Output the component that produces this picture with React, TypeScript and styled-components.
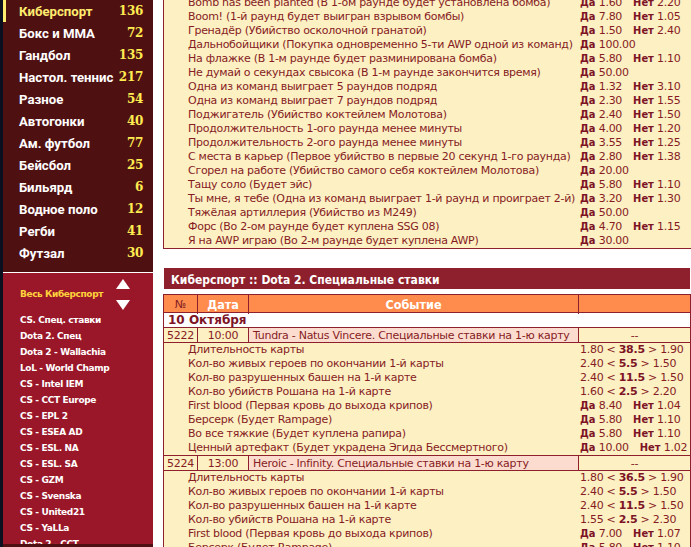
import styled, { createGlobalStyle } from "styled-components";

const GlobalStyle = createGlobalStyle`
  html, body {
    margin: 0;
    padding: 0;
    background: #ffffff;
  }
  #root {
    height: 547px;
    overflow: hidden;
  }
`;

const Page = styled.div`
  display: flex;
  height: 547px;
  overflow: hidden;
  font-family: "DejaVu Sans", sans-serif;
  font-size: 11px;
  letter-spacing: -0.28px;
  color: #851c24;
`;

const Sidebar = styled.aside`
  position: relative;
  flex: 0 0 150px;
  height: 547px;
  overflow: hidden;
  border-left: 3px solid #0a1020;
  display: flex;
  flex-direction: column;
`;

const SportList = styled.div`
  height: 272px;
  background: #4f1012;
`;

const SportRow = styled.div<{ $active?: boolean }>`
  height: 22px;
  display: flex;
  align-items: center;
  justify-content: space-between;
  box-sizing: border-box;
  padding: 0 10px 0 ${(p) => (p.$active ? 13 : 16)}px;
  border-left: ${(p) => (p.$active ? "3px solid #ffec6e" : "none")};
  font-family: Roboto, sans-serif;
  font-weight: 700;
  font-size: 13.2px;
  letter-spacing: 0;
  white-space: nowrap;
  color: ${(p) => (p.$active ? "#ffec6e" : "#ffffff")};
`;

const SportCount = styled.span`
  font-family: "DejaVu Serif", serif;
  font-weight: 700;
  font-size: 12px;
  letter-spacing: -0.3px;
  color: #ffec50;
`;

const LeagueBox = styled.div`
  flex: 1;
  border-top: 1px solid #ffffff;
  background: #9a1729;
  padding-top: 13px;
  overflow: hidden;
`;

const LeagueHead = styled.div`
  position: relative;
  height: 16px;
  margin-bottom: 10px;
  padding-left: 17px;
  display: flex;
  align-items: center;
  font-weight: 700;
  font-size: 9px;
  letter-spacing: -0.4px;
  color: #ffd23c;
`;

const Arrows = styled.div`
  position: absolute;
  left: 113px;
  top: -7px;
  display: flex;
  flex-direction: column;
  gap: 11px;
`;

const League = styled.div`
  height: 16px;
  line-height: 16px;
  padding-left: 17px;
  font-weight: 700;
  font-size: 9px;
  letter-spacing: -0.36px;
  color: #ffffff;
  white-space: nowrap;
`;

const SidebarFoot = styled.div`
  position: absolute;
  left: 0;
  right: 0;
  bottom: 0;
  height: 3px;
  background: #4f1012;
`;

const Main = styled.main`
  flex: 1;
  min-width: 0;
  margin-left: 10px;
`;

const TopPanel = styled.section`
  width: 529px;
  box-sizing: border-box;
  height: 249px;
  background: #fdf0c3;
  border-left: 1px solid #8e1f2c;
  border-bottom: 1px solid #8e1f2c;
  overflow: hidden;
`;

const PanelRows = styled.div`
  margin-top: -4px;
`;

const BetRow = styled.div`
  height: 14px;
  line-height: 14px;
  display: grid;
  grid-template-columns: 392px 1fr;
  padding-left: 24px;
  white-space: nowrap;
`;

const Yes = styled.b`
  font-weight: 700;
  font-stretch: condensed;
  letter-spacing: 0;
  color: #7c1426;
`;

const No = styled(Yes)`
  margin-left: 11px;
`;

const Strong = styled.b`
  font-weight: 700;
  color: #7c1426;
`;

const SectionTitle = styled.h2`
  margin: 19px 0 0 1px;
  width: 526px;
  height: 21px;
  box-sizing: border-box;
  padding-left: 7px;
  background: #8e1f2c;
  color: #ffffff;
  font-size: 12px;
  font-stretch: condensed;
  font-weight: 700;
  line-height: 24px;
  letter-spacing: 0;
  white-space: nowrap;
`;

const Board = styled.section`
  margin-top: 5px;
  width: 528px;
  box-sizing: border-box;
  background: #fdf0c3;
  border: 1px solid #8e1f2c;
  border-bottom: none;
`;

const HeadRow = styled.div`
  display: grid;
  grid-template-columns: 34px 51px 330px 1fr;
  height: 18px;
  box-sizing: border-box;
  background: #ff8c4c;
  border-bottom: 1px solid #8e1f2c;
`;

const HeadCell = styled.div<{ $plain?: boolean }>`
  border-right: 1px solid #8e1f2c;
  text-align: center;
  line-height: 19px;
  font-weight: ${(p) => (p.$plain ? 400 : 700)};
  font-size: ${(p) => (p.$plain ? 11 : 12.5)}px;
  font-stretch: ${(p) => (p.$plain ? "normal" : "condensed")};
  letter-spacing: 0;
  color: ${(p) => (p.$plain ? "#851c24" : "#ffffff")};

  &:last-child {
    border-right: none;
  }
`;

const DateRow = styled.div`
  height: 14px;
  line-height: 15px;
  background: #ffffff;
  padding-left: 4px;
  font-weight: 700;
  font-size: 12px;
  letter-spacing: 0;
  color: #7c1426;
`;

const EventRow = styled.div`
  display: grid;
  grid-template-columns: 34px 51px 330px 1fr;
  height: 16px;
  box-sizing: border-box;
  border-top: 1px solid #8e1f2c;
  border-bottom: 1px solid #8e1f2c;
`;

const EventCell = styled.div<{ $name?: boolean }>`
  border-right: 1px solid #8e1f2c;
  line-height: 15px;
  white-space: nowrap;
  overflow: hidden;
  text-align: ${(p) => (p.$name ? "left" : "center")};
  padding-left: ${(p) => (p.$name ? 4 : 0)}px;
  background: ${(p) => (p.$name ? "#fddcd0" : "transparent")};

  &:last-child {
    border-right: none;
  }
`;

const sports: [string, number][] = [
  ["Киберспорт", 136],
  ["Бокс и ММА", 72],
  ["Гандбол", 135],
  ["Настол. теннис", 217],
  ["Разное", 54],
  ["Автогонки", 40],
  ["Ам. футбол", 77],
  ["Бейсбол", 25],
  ["Бильярд", 6],
  ["Водное поло", 12],
  ["Регби", 41],
  ["Футзал", 30],
];

const leagues = [
  "CS. Спец. ставки",
  "Dota 2. Спец",
  "Dota 2 - Wallachia",
  "LoL - World Champ",
  "CS - Intel IEM",
  "CS - CCT Europe",
  "CS - EPL 2",
  "CS - ESEA AD",
  "CS - ESL. NA",
  "CS - ESL. SA",
  "CS - GZM",
  "CS - Svenska",
  "CS - United21",
  "CS - YaLLa",
  "Dota 2 - CCT",
];

const csBets: [string, string, string?][] = [
  ["Bomb has been planted (В 1-ом раунде будет установлена бомба)", "1.60", "2.20"],
  ["Boom! (1-й раунд будет выигран взрывом бомбы)", "7.80", "1.05"],
  ["Гренадёр (Убийство осколочной гранатой)", "1.50", "2.40"],
  ["Дальнобойщики (Покупка одновременно 5-ти AWP одной из команд)", "100.00"],
  ["На флажке (В 1-м раунде будет разминирована бомба)", "5.80", "1.10"],
  ["Не думай о секундах свысока (В 1-м раунде закончится время)", "50.00"],
  ["Одна из команд выиграет 5 раундов подряд", "1.32", "3.10"],
  ["Одна из команд выиграет 7 раундов подряд", "2.30", "1.55"],
  ["Поджигатель (Убийство коктейлем Молотова)", "2.40", "1.50"],
  ["Продолжительность 1-ого раунда менее минуты", "4.00", "1.20"],
  ["Продолжительность 2-ого раунда менее минуты", "3.55", "1.25"],
  ["С места в карьер (Первое убийство в первые 20 секунд 1-го раунда)", "2.80", "1.38"],
  ["Сгорел на работе (Убийство самого себя коктейлем Молотова)", "20.00"],
  ["Тащу соло (Будет эйс)", "5.80", "1.10"],
  ["Ты мне, я тебе (Одна из команд выиграет 1-й раунд и проиграет 2-й)", "3.20", "1.30"],
  ["Тяжёлая артиллерия (Убийство из M249)", "50.00"],
  ["Форс (Во 2-ом раунде будет куплена SSG 08)", "4.70", "1.15"],
  ["Я на AWP играю (Во 2-м раунде будет куплена AWP)", "30.00"],
];

type BlockLine =
  | { name: string; total: [string, string, string] }
  | { name: string; yes: string; no?: string };

const firstBlock: BlockLine[] = [
  { name: "Длительность карты", total: ["1.80", "38.5", "1.90"] },
  { name: "Кол-во живых героев по окончании 1-й карты", total: ["2.40", "5.5", "1.50"] },
  { name: "Кол-во разрушенных башен на 1-й карте", total: ["2.40", "11.5", "1.50"] },
  { name: "Кол-во убийств Рошана на 1-й карте", total: ["1.60", "2.5", "2.20"] },
  { name: "First blood (Первая кровь до выхода крипов)", yes: "8.40", no: "1.04" },
  { name: "Берсерк (Будет Rampage)", yes: "5.80", no: "1.10" },
  { name: "Во все тяжкие (Будет куплена рапира)", yes: "5.80", no: "1.10" },
  { name: "Ценный артефакт (Будет украдена Эгида Бессмертного)", yes: "10.00", no: "1.02" },
];

const secondBlock: BlockLine[] = [
  { name: "Длительность карты", total: ["1.80", "36.5", "1.90"] },
  { name: "Кол-во живых героев по окончании 1-й карты", total: ["2.40", "5.5", "1.50"] },
  { name: "Кол-во разрушенных башен на 1-й карте", total: ["2.40", "11.5", "1.50"] },
  { name: "Кол-во убийств Рошана на 1-й карте", total: ["1.55", "2.5", "2.30"] },
  { name: "First blood (Первая кровь до выхода крипов)", yes: "7.00", no: "1.07" },
  { name: "Берсерк (Будет Rampage)", yes: "5.80", no: "1.10" },
];

const Odds = ({ yes, no }: { yes: string; no?: string }) => (
  <span>
    <Yes>Да</Yes> {yes}
    {no && (
      <>
        <No>Нет</No> {no}
      </>
    )}
  </span>
);

const Block = ({ lines }: { lines: BlockLine[] }) => (
  <>
    {lines.map((line, i) => (
      <BetRow key={i}>
        <span>{line.name}</span>
        {"total" in line ? (
          <span>
            {line.total[0]} &lt; <Strong>{line.total[1]}</Strong> &gt; {line.total[2]}
          </span>
        ) : (
          <Odds yes={line.yes} no={line.no} />
        )}
      </BetRow>
    ))}
  </>
);

const App = () => {
  return (
    <Page>
      <GlobalStyle />
      <Sidebar>
        <SportList>
          {sports.map(([name, count], i) => (
            <SportRow key={name} $active={i === 0}>
              <span>{name}</span>
              <SportCount>{count}</SportCount>
            </SportRow>
          ))}
        </SportList>
        <LeagueBox>
          <LeagueHead>
            Весь Киберспорт
            <Arrows>
              <svg width="14" height="10" viewBox="0 0 14 10">
                <path d="M7 0 L14 10 L0 10 Z" fill="#ffffff" />
              </svg>
              <svg width="14" height="10" viewBox="0 0 14 10">
                <path d="M0 0 L14 0 L7 10 Z" fill="#ffffff" />
              </svg>
            </Arrows>
          </LeagueHead>
          {leagues.map((name) => (
            <League key={name}>{name}</League>
          ))}
        </LeagueBox>
        <SidebarFoot />
      </Sidebar>
      <Main>
        <TopPanel>
          <PanelRows>
            {csBets.map(([name, yes, no]) => (
              <BetRow key={name}>
                <span>{name}</span>
                <Odds yes={yes} no={no} />
              </BetRow>
            ))}
          </PanelRows>
        </TopPanel>
        <SectionTitle>Киберспорт :: Dota 2. Специальные ставки</SectionTitle>
        <Board>
          <HeadRow>
            <HeadCell $plain>№</HeadCell>
            <HeadCell>Дата</HeadCell>
            <HeadCell>Событие</HeadCell>
            <HeadCell />
          </HeadRow>
          <DateRow>10 Октября</DateRow>
          <EventRow>
            <EventCell>5222</EventCell>
            <EventCell>10:00</EventCell>
            <EventCell $name>Tundra - Natus Vincere. Специальные ставки на 1-ю карту</EventCell>
            <EventCell>--</EventCell>
          </EventRow>
          <Block lines={firstBlock} />
          <EventRow>
            <EventCell>5224</EventCell>
            <EventCell>13:00</EventCell>
            <EventCell $name>Heroic - Infinity. Специальные ставки на 1-ю карту</EventCell>
            <EventCell>--</EventCell>
          </EventRow>
          <Block lines={secondBlock} />
        </Board>
      </Main>
    </Page>
  );
};

export default App;
